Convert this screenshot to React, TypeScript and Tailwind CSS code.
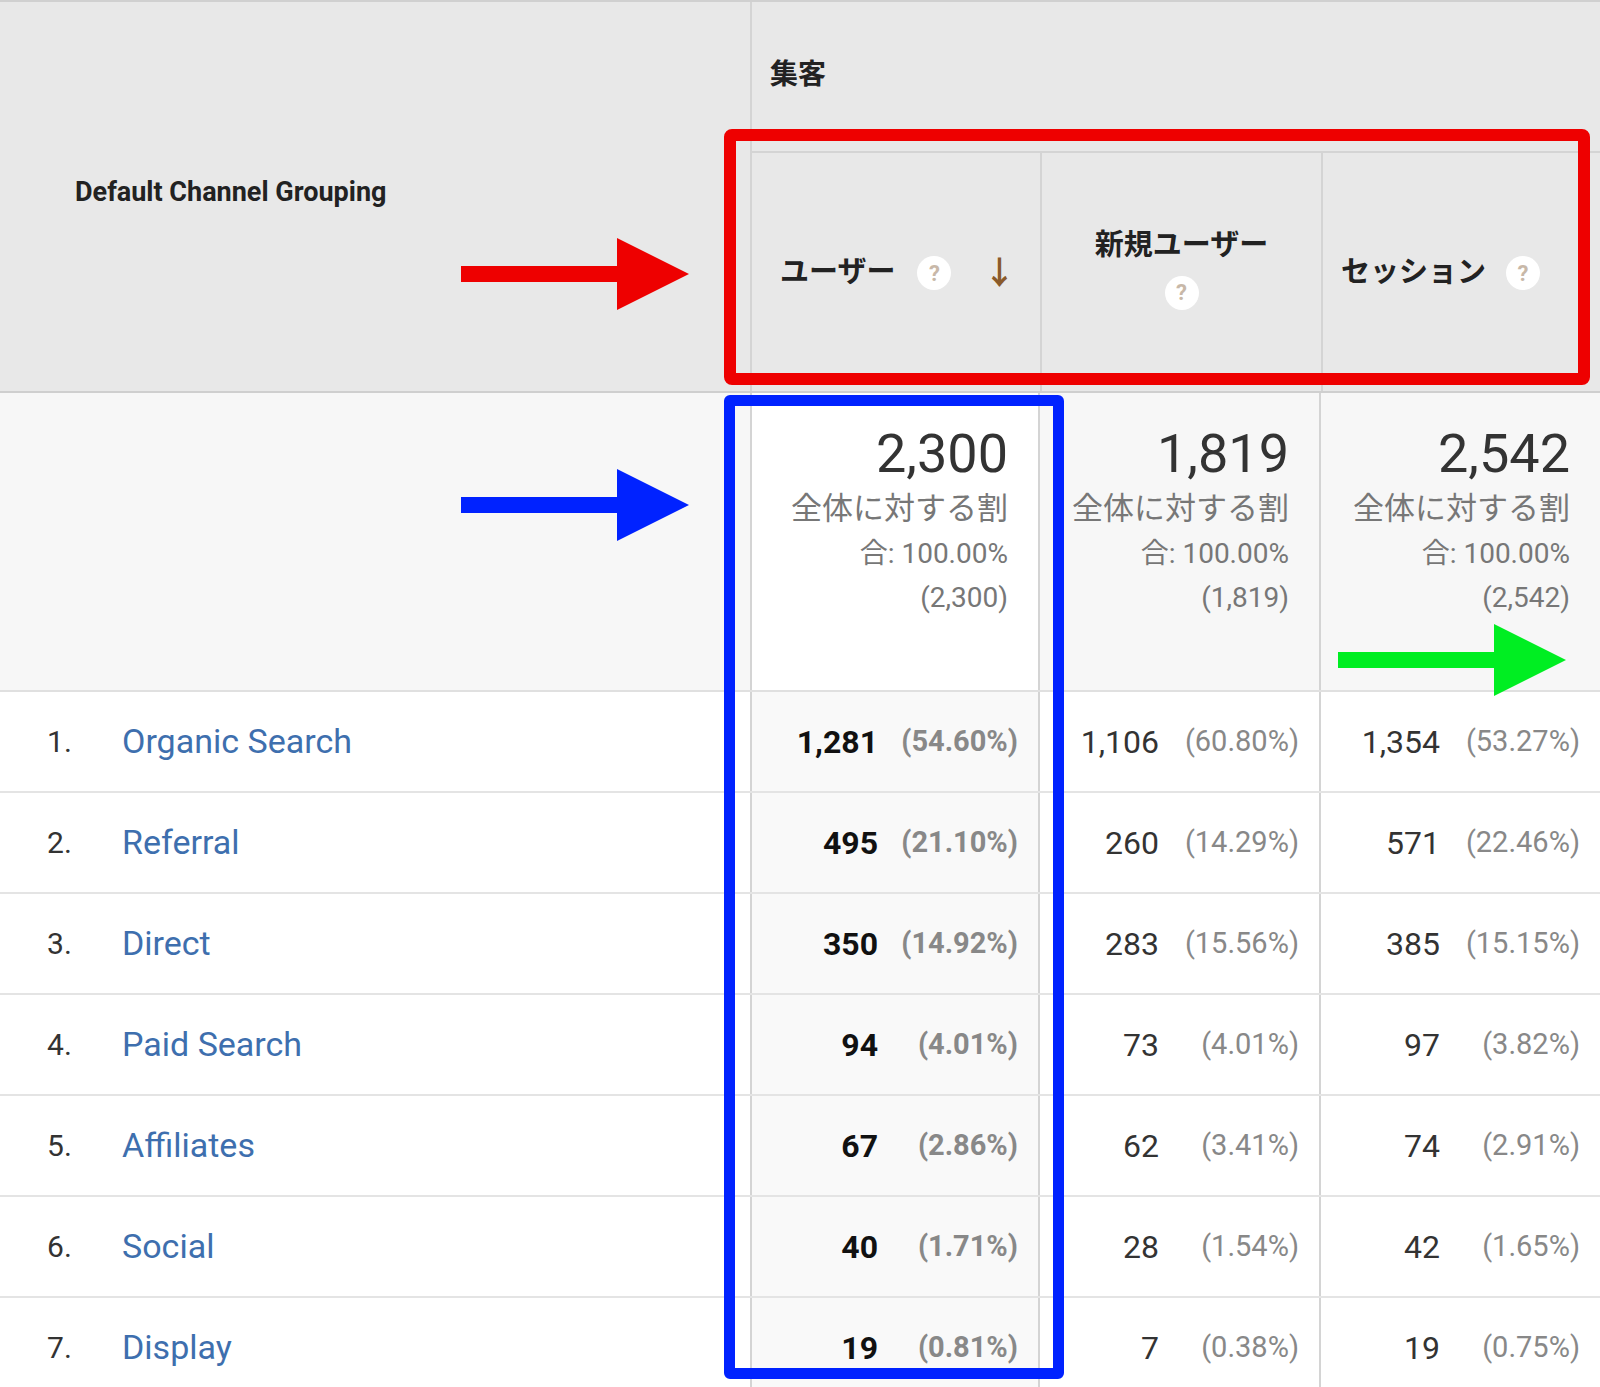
const rows = [
  ["Organic Search", "1,281", "(54.60%)", "1,106", "(60.80%)", "1,354", "(53.27%)"],
  ["Referral", "495", "(21.10%)", "260", "(14.29%)", "571", "(22.46%)"],
  ["Direct", "350", "(14.92%)", "283", "(15.56%)", "385", "(15.15%)"],
  ["Paid Search", "94", "(4.01%)", "73", "(4.01%)", "97", "(3.82%)"],
  ["Affiliates", "67", "(2.86%)", "62", "(3.41%)", "74", "(2.91%)"],
  ["Social", "40", "(1.71%)", "28", "(1.54%)", "42", "(1.65%)"],
  ["Display", "19", "(0.81%)", "7", "(0.38%)", "19", "(0.75%)"],
];

const totals = [
  ["2,300", "(2,300)"],
  ["1,819", "(1,819)"],
  ["2,542", "(2,542)"],
];

function Help() {
  return (
    <span className="inline-flex h-[34px] w-[34px] items-center justify-center rounded-full bg-white text-[22px] text-[#c8b8a8]">?</span>
  );
}

function Arrow({ color, className }: { color: string; className: string }) {
  return (
    <svg className={"absolute " + className} width="228" height="72" viewBox="0 0 228 72">
      <rect x="0" y="28" width="160" height="16" fill={color} />
      <polygon points="156,0 228,36 156,72" fill={color} />
    </svg>
  );
}

export default function App() {
  const cols = "grid grid-cols-[750px_288px_281px_281px]";
  return (
    <div className="relative h-[1387px] w-[1600px] overflow-hidden bg-white text-[#222]" style={{ fontFamily: "Roboto, 'Noto Sans CJK JP', sans-serif" }}>
      {/* header */}
      <div className={cols + " h-[393px] border-t-2 border-[#d0d0d0] bg-[#e8e8e8] border-b-2 border-b-[#cfcfcf]"}>
        <div className="flex items-start pl-[75px] pt-[170px] text-[27px] font-bold">Default Channel Grouping</div>
        <div className="col-span-3 flex flex-col border-l-2 border-[#d4d4d4]">
          <div className="h-[149px] pl-[18px] pt-[52px] text-[28px] font-bold">集客</div>
          <div className="grid flex-1 grid-cols-[288px_281px_281px] border-t-2 border-[#d4d4d4]">
            <div className="flex items-center gap-[22px] pl-[28px] pt-[2px] text-[29px] font-bold">
              <span>ユーザー</span><Help />
              <span className="ml-[10px] text-[32px] text-[#8a5a2a]">↓</span>
            </div>
            <div className="flex flex-col items-center justify-center gap-[8px] border-l-2 border-[#d4d4d4] pb-[10px] text-[29px] font-bold">
              <span>新規ユーザー</span><Help />
            </div>
            <div className="flex items-center gap-[20px] border-l-2 border-[#d4d4d4] pl-[18px] pt-[2px] text-[29px] font-bold">
              <span>セッション</span><Help />
            </div>
          </div>
        </div>
      </div>
      {/* totals */}
      <div className={cols + " h-[299px] border-b-2 border-[#e0e0e0] bg-[#f7f7f7]"}>
        <div />
        {totals.map((t, i) => (
          <div key={i} className={"flex flex-col items-end border-l-2 border-[#d4d4d4] pr-[30px] pt-[30px] text-[#777] " + (i === 0 ? "bg-white" : "")}>
            <div className="text-[54px] leading-[62px] text-[#333]">{t[0]}</div>
            <div className="mt-[2px] text-[31px] leading-[44px]">全体に対する割</div>
            <div className="text-[28px] leading-[46px]">合: 100.00%</div>
            <div className="text-[28px] leading-[42px]">{t[1]}</div>
          </div>
        ))}
      </div>
      {/* rows */}
      {rows.map((r, i) => (
        <div key={i} className={cols + " h-[101px] border-b-2 border-[#e4e4e4]"}>
          <div className="flex items-center text-[34px]">
            <span className="w-[74px] pl-[47px] text-[30px] text-[#333]">{i + 1}.</span>
            <span className="pl-[48px] text-[#3e6fae]">{r[0]}</span>
          </div>
          {[0, 1, 2].map((c) => (
            <div key={c} className={"flex items-center justify-end border-l-2 border-[#d4d4d4] pr-[20px] " + (c === 0 ? "bg-[#f9f9f9]" : "")}>
              <span className={"text-[32px] " + (c === 0 ? "font-bold text-[#111]" : "text-[#333]")}>{r[1 + c * 2]}</span>
              <span className={"w-[140px] text-right text-[29px] text-[#888] " + (c === 0 ? "font-bold" : "")}>{r[2 + c * 2]}</span>
            </div>
          ))}
        </div>
      ))}
      {/* annotations */}
      <div className="absolute left-[724px] top-[129px] h[10px] h-[256px] w-[866px] rounded-[8px] border-[12px] border-[#ee0000]" />
      <div className="absolute left-[724px] top-[395px] h-[984px] w-[340px] rounded-[6px] border-[11px] border-[#0022ff]" />
      <Arrow color="#ee0000" className="left-[461px] top-[238px]" />
      <Arrow color="#0022ff" className="left-[461px] top-[469px]" />
      <Arrow color="#00ee22" className="left-[1338px] top-[624px]" />
    </div>
  );
}
